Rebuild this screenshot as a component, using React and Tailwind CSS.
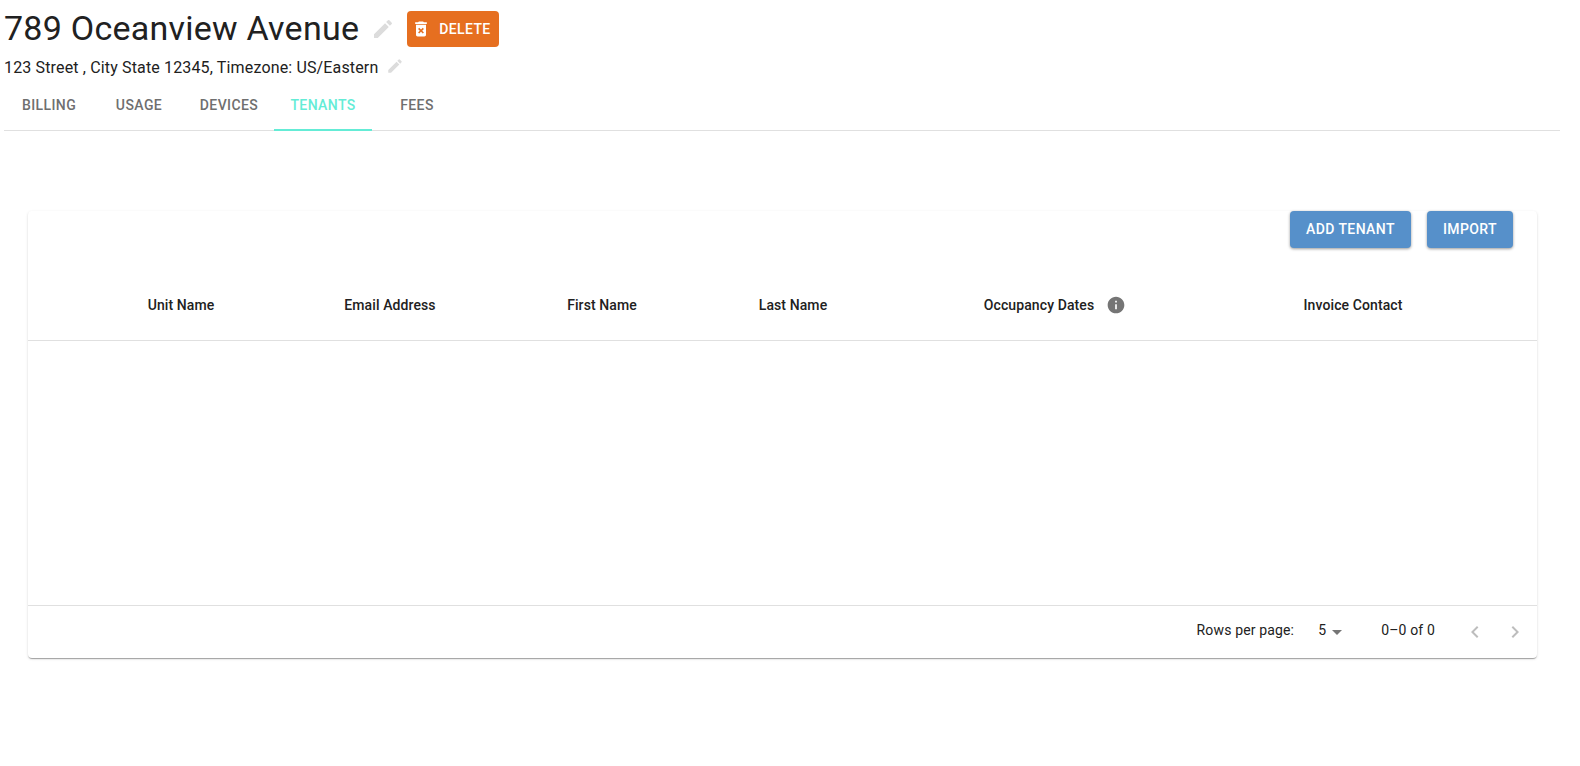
const font = { fontFamily: 'Roboto, sans-serif' };

const tabs = [
  { label: 'BILLING', width: 'w-[90px]' },
  { label: 'USAGE', width: 'w-[90px]' },
  { label: 'DEVICES', width: 'w-[90px]' },
  { label: 'TENANTS', width: 'w-[98px]', active: true },
  { label: 'FEES', width: 'w-[90px]' },
];

function PencilIcon({ className }) {
  return (
    <svg viewBox="0 0 24 24" className={className} fill="currentColor">
      <path d="M3 17.25V21h3.75L17.81 9.94l-3.75-3.75L3 17.25zM20.71 7.04a1 1 0 0 0 0-1.41l-2.34-2.34a1 1 0 0 0-1.41 0l-1.83 1.83 3.75 3.75 1.83-1.83z" />
    </svg>
  );
}

function TrashIcon({ className }) {
  return (
    <svg viewBox="0 0 24 24" className={className} fill="currentColor">
      <path d="M6 19c0 1.1.9 2 2 2h8c1.1 0 2-.9 2-2V7H6v12zm2.46-7.12 1.41-1.41L12 12.59l2.12-2.12 1.41 1.41L13.41 14l2.12 2.12-1.41 1.41L12 15.41l-2.12 2.12-1.41-1.41L10.59 14l-2.13-2.12zM15.5 4l-1-1h-5l-1 1H5v2h14V4z" />
    </svg>
  );
}

function InfoIcon({ className }) {
  return (
    <svg viewBox="0 0 24 24" className={className} fill="currentColor">
      <path d="M12 2C6.48 2 2 6.48 2 12s4.48 10 10 10 10-4.48 10-10S17.52 2 12 2zm1 15h-2v-6h2v6zm0-8h-2V7h2v2z" />
    </svg>
  );
}

function PrevIcon({ className }) {
  return (
    <svg viewBox="0 0 24 24" className={className} fill="currentColor">
      <path d="M15.41 7.41 14 6l-6 6 6 6 1.41-1.41L10.83 12z" />
    </svg>
  );
}

function NextIcon({ className }) {
  return (
    <svg viewBox="0 0 24 24" className={className} fill="currentColor">
      <path d="M10 6 8.59 7.41 13.17 12l-4.58 4.59L10 18l6-6z" />
    </svg>
  );
}

export default function App() {
  return (
    <div className="min-h-[766px] bg-white text-[#212121] pl-1 pr-5" style={font}>
      {/* Title */}
      <div className="flex items-start h-[58px] pt-[10px]">
        <h1 className="text-[34px] leading-[36px] tracking-[0.25px] font-normal">789 Oceanview Avenue</h1>
        <PencilIcon className="w-6 h-6 ml-[12px] mt-[7px] text-[#dcdcdc]" />
        <button className="ml-[12px] mt-[1px] h-9 w-[92px] flex items-center pl-1 pb-[1px] rounded bg-[#e66f20] text-white text-sm font-medium tracking-[0.4px]">
          <TrashIcon className="w-5 h-5" />
          <span className="ml-2">DELETE</span>
        </button>
      </div>

      {/* Address */}
      <div className="flex items-center h-[20px]">
        <span className="text-base leading-5 tracking-[0.15px]">123 Street , City State 12345, Timezone: US/Eastern</span>
        <PencilIcon className="w-[18px] h-[18px] ml-[8px] mb-[5px] text-[#dcdcdc]" />
      </div>

      {/* Tabs */}
      <div className="flex h-[53px] border-b border-[#e0e0e0]">
        {tabs.map((tab) => (
          <div
            key={tab.label}
            className={`${tab.width} flex items-center justify-center text-sm font-medium tracking-[0.4px] ${
              tab.active ? 'text-[#64ecd6] border-b-2 border-[#64ecd6] h-[53px] pt-[3px]' : 'text-[#6f6f6f] pt-[1px]'
            }`}
          >
            {tab.label}
          </div>
        ))}
      </div>

      {/* Card */}
      <div className="ml-6 mr-[23px] mt-20 rounded bg-white shadow-[0_2px_1px_-1px_rgba(0,0,0,0.2),0_1px_1px_0_rgba(0,0,0,0.14),0_1px_3px_0_rgba(0,0,0,0.12)]">
        <div className="flex justify-end gap-4 pr-6">
          <button className="h-[37px] w-[121px] pb-[2px] rounded bg-[#5690ca] text-white text-sm font-medium tracking-[0.4px] shadow-[0_1px_3px_rgba(0,0,0,0.4)]">
            ADD TENANT
          </button>
          <button className="h-[37px] w-[86px] pb-[2px] rounded bg-[#5690ca] text-white text-sm font-medium tracking-[0.4px] shadow-[0_1px_3px_rgba(0,0,0,0.4)]">
            IMPORT
          </button>
        </div>

        <div className="grid grid-cols-[210px_208px_216px_166px_358px_238px] items-center pl-12 pt-[21px] h-[93px] border-b border-[#e0e0e0] text-sm font-medium tracking-[0.1px] text-[#212121]">
          <div className="text-center">Unit Name</div>
          <div className="text-center">Email Address</div>
          <div className="text-center">First Name</div>
          <div className="text-center">Last Name</div>
          <div className="flex items-center justify-center">
            Occupancy Dates
            <InfoIcon className="w-5 h-5 ml-[12px] text-[#757575]" />
          </div>
          <div className="text-center">Invoice Contact</div>
        </div>

        <div className="h-[264px]" />

        <div className="flex items-center justify-end h-[53px] pb-[4px] border-t border-[#e0e0e0] text-sm tracking-[0.15px] text-[#212121] pr-[10px]">
          <span>Rows per page:</span>
          <span className="ml-6">5</span>
          <span className="ml-[6px] w-0 h-0 border-x-[5px] border-x-transparent border-t-[5px] border-t-[#757575] mt-[4px]" />
          <span className="ml-[39px]">0–0 of 0</span>
          <PrevIcon className="w-6 h-6 ml-[28px] mt-[4px] text-[#bdbdbd]" />
          <NextIcon className="w-6 h-6 ml-4 mt-[4px] text-[#bdbdbd]" />
        </div>
      </div>
    </div>
  );
}
